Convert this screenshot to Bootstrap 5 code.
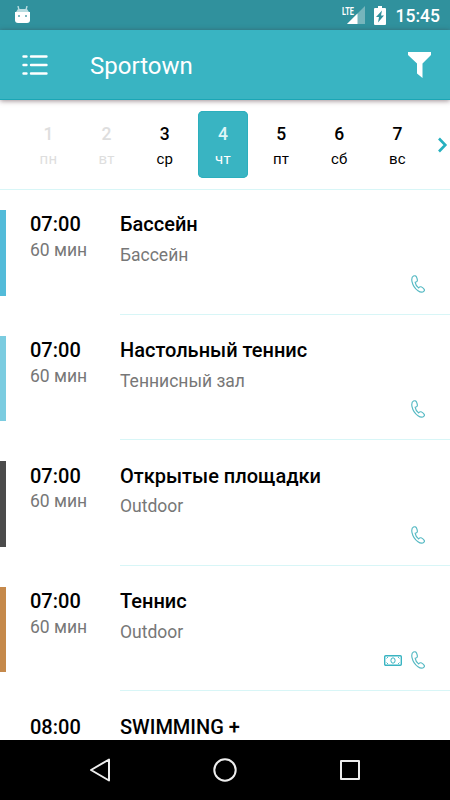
<!DOCTYPE html>
<html lang="ru">
<head>
<meta charset="utf-8">
<meta name="viewport" content="width=device-width, initial-scale=1">
<title>Sportown</title>
<link rel="stylesheet" href="https://cdn.jsdelivr.net/npm/bootstrap@5.3.0/dist/css/bootstrap.min.css">
<style>
body{font-family:Roboto,"Noto Sans",sans-serif;background:#fff;color:#000}
.screen{width:450px;height:800px}
svg{display:block;flex:none}
.status{height:30px;background:#30919d;padding:0 10px 0 14px}
.clock{font-size:17.5px;font-weight:500;line-height:30px;padding-top:1px;margin-left:9.5px}
.appbar{height:70px;background:#39b4c2;border-bottom:1px solid #1ba6b5;box-shadow:0 1px 5px rgba(60,30,40,.5);padding:0 18px 0 22px;z-index:2}
.title{font-size:24px;line-height:30px;margin-left:42px;padding-top:3px}
.days{height:90px;border-bottom:1px solid #d8f6f7;padding:11px 0 0 23.4px}
.day{width:50px;height:67px;margin-right:8.2px;border-radius:5px;padding-top:12px}
.day b{font-size:17.5px;font-weight:500;line-height:22px}
.day span{font-size:15px;line-height:20px;margin-top:4px;letter-spacing:.2px}
.day.off{color:#dedede}
.day.on{background:#39b4c2;box-shadow:inset 0 0 0 1px #2cafbd}
.day.on b{color:#dff6f8}
.next{margin:26px 0 0 5px}
.list{margin-top:-1px}
.item{height:125.6px;flex:none}
.stripe{width:6px;height:85.5px;margin-top:21px}
.when{width:90px;margin-left:24px;padding-top:22.4px}
.what{border-bottom:1px solid #d8f6f7;padding-top:22.4px}
.main{font-size:20px;font-weight:500;line-height:26px}
.sub{font-size:17.5px;line-height:24px;color:#777}
.when .sub{margin-top:.6px}
.what .sub{margin-top:5.6px}
.marks{right:25px;bottom:21px;gap:9px}
.s1{background:#53bbd9}.s2{background:#7bcce0}.s3{background:#4b4b4b}.s4{background:#c5894b}
.keys{height:60px;background:#000}
</style>
<script src="https://cdn.jsdelivr.net/npm/bootstrap@5.3.0/dist/js/bootstrap.bundle.min.js"></script>
</head>
<body>
<svg width="0" height="0" class="position-absolute">
<symbol id="phone" viewBox="0 0 14 18"><path d="M2.500 1.100C.8 2 .5 4.200 1 6.600c.8 3.700 3 7 6 9.100 2.100 1.500 4.500 1.900 6 .4.800-.8.500-1.700-.3-2.400-.8-.8-1.700-1.600-2.700-1.900-1.100-.3-1.700.3-2.400 1.100C5.900 11.500 4.500 9.500 4.200 7.300c1.300-.2 2.200-.6 2.200-1.700 0-1.300-.4-2.600-.9-3.700C5 .8 3.700.5 2.500 1.100Z" fill="none" stroke="#55b9c3" stroke-width="1.150"/></symbol>
</svg>
<div class="screen d-flex flex-column overflow-hidden">
  <header class="status d-flex align-items-center text-white flex-shrink-0">
    <svg width="17" height="18" viewBox="0 0 17 18"><path d="M4 0 5 4M13 0 12 4" stroke="#b9dce0" stroke-width="1.400"/><path d="M4 3h9l2 3H2Z" fill="#b9dce0"/><path d="M1 6h15v8q0 3-3 3H4q-3 0-3-3Z" fill="#fff"/><path d="M4 9h2v2H4ZM11 9h2v2h-2Z" fill="#7eb9c0"/></svg>
    <svg class="ms-auto" width="24" height="20" viewBox="0 0 24 20"><path d="M23 1v18H5Z" fill="#76b5bc"/><path d="M15.500 8.500V19H5Z" fill="#fff"/><path d="M0 0h12.500v9.500H0Z" fill="#30919d"/><text x="0" y="9.500" font-size="11" font-weight="700" fill="#fff" textLength="11.800" lengthAdjust="spacingAndGlyphs">LTE</text></svg>
    <svg width="12" height="19" viewBox="0 0 12 19" class="ms-2"><path d="M4 0h4v2h3q1 0 1 1v15q0 1-1 1H1q-1 0-1-1V3q0-1 1-1h3Z" fill="#fff"/><path d="M8 4.500 2 11h3L4 16.500l6-7H7Z" fill="#30919d"/></svg>
    <span class="clock">15:45</span>
  </header>
  <nav class="appbar d-flex align-items-center text-white flex-shrink-0 position-relative">
    <svg width="26" height="22" viewBox="0 0 26 22"><path d="M1.500 2.500h3M9 2.500h15.500M1.500 11h3M9 11h15.500M1.500 19.500h3M9 19.500h15.500" stroke="#fff" stroke-width="2.400" stroke-linecap="round"/></svg>
    <span class="title">Sportown</span>
    <svg class="ms-auto" width="25" height="28" viewBox="0 0 25 28"><path d="M1 1h23v3l-8.500 8.500V27L10 22.500v-10L1 4Z" fill="#fff"/></svg>
  </nav>
  <section class="days d-flex flex-shrink-0">
    <div class="day off d-flex flex-column align-items-center flex-shrink-0"><b>1</b><span>пн</span></div>
    <div class="day off d-flex flex-column align-items-center flex-shrink-0"><b>2</b><span>вт</span></div>
    <div class="day d-flex flex-column align-items-center flex-shrink-0"><b>3</b><span>ср</span></div>
    <div class="day on text-white d-flex flex-column align-items-center flex-shrink-0"><b>4</b><span>чт</span></div>
    <div class="day d-flex flex-column align-items-center flex-shrink-0"><b>5</b><span>пт</span></div>
    <div class="day d-flex flex-column align-items-center flex-shrink-0"><b>6</b><span>сб</span></div>
    <div class="day d-flex flex-column align-items-center flex-shrink-0"><b>7</b><span>вс</span></div>
    <svg class="next" width="12" height="16" viewBox="0 0 12 16"><path d="M3 1.500 9.300 8 3 14.500" fill="none" stroke="#26b0bf" stroke-width="2.600"/></svg>
  </section>
  <main class="list flex-fill overflow-hidden d-flex flex-column">
    <div class="item d-flex"><div class="stripe s1"></div>
      <div class="when"><div class="main">07:00</div><div class="sub">60 мин</div></div>
      <div class="what flex-fill position-relative"><div class="main">Бассейн</div><div class="sub">Бассейн</div>
        <div class="marks position-absolute d-flex align-items-center"><svg width="14" height="18"><use href="#phone"/></svg></div></div></div>
    <div class="item d-flex"><div class="stripe s2"></div>
      <div class="when"><div class="main">07:00</div><div class="sub">60 мин</div></div>
      <div class="what flex-fill position-relative"><div class="main">Настольный теннис</div><div class="sub">Теннисный зал</div>
        <div class="marks position-absolute d-flex align-items-center"><svg width="14" height="18"><use href="#phone"/></svg></div></div></div>
    <div class="item d-flex"><div class="stripe s3"></div>
      <div class="when"><div class="main">07:00</div><div class="sub">60 мин</div></div>
      <div class="what flex-fill position-relative"><div class="main">Открытые площадки</div><div class="sub">Outdoor</div>
        <div class="marks position-absolute d-flex align-items-center"><svg width="14" height="18"><use href="#phone"/></svg></div></div></div>
    <div class="item d-flex"><div class="stripe s4"></div>
      <div class="when"><div class="main">07:00</div><div class="sub">60 мин</div></div>
      <div class="what flex-fill position-relative"><div class="main">Теннис</div><div class="sub">Outdoor</div>
        <div class="marks position-absolute d-flex align-items-center"><svg width="18" height="11" viewBox="0 0 18 11" fill="none" stroke="#39b4c2"><rect x=".7" y=".7" width="16.600" height="9.600" rx="1" stroke-width="1.400"/><ellipse cx="9" cy="5.500" rx="2.100" ry="2.700"/><path d="M2.500 3.500 4 2M2.500 7.500 4 9M15.500 3.500 14 2M15.500 7.500 14 9" stroke-width=".9"/></svg><svg width="14" height="18"><use href="#phone"/></svg></div></div></div>
    <div class="item d-flex"><div class="stripe"></div>
      <div class="when"><div class="main">08:00</div></div>
      <div class="what flex-fill"><div class="main">SWIMMING +</div></div></div>
  </main>
  <footer class="keys d-flex flex-shrink-0 align-items-center position-relative">
    <svg width="450" height="60" viewBox="0 0 450 60" fill="none" stroke="#eee" stroke-width="2" stroke-linejoin="round"><path d="M109 19.500v21L91 30Z"/><circle cx="225" cy="30" r="10.700"/><rect x="341" y="21" width="18" height="18"/></svg>
  </footer>
</div>
</body>
</html>
